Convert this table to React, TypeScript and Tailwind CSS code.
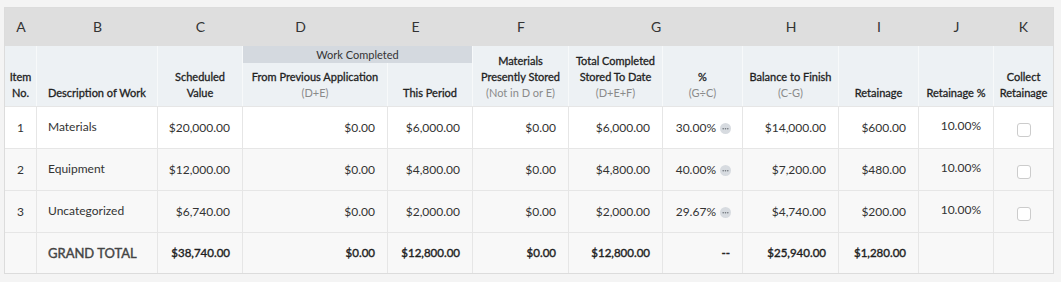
import React from "react";

const COLS =
  "grid grid-cols-[32px_121px_85px_145px_85px_96px_94px_80px_96px_80px_75px_59px]";

function Dots() {
  return (
    <svg width="11" height="11" viewBox="0 0 11 11" className="mt-[2px] shrink-0">
      <circle cx="5.5" cy="5.5" r="5.5" fill="#d7dbe0" />
      <circle cx="3.2" cy="5.7" r="0.8" fill="#6f757c" />
      <circle cx="5.5" cy="5.7" r="0.8" fill="#6f757c" />
      <circle cx="7.8" cy="5.7" r="0.8" fill="#6f757c" />
    </svg>
  );
}

function Checkbox() {
  return (
    <div className="w-[14px] h-[14px] rounded-[3px] border border-[#cccccc] bg-white" />
  );
}

type Row = {
  no: string;
  desc: string;
  c: string;
  d: string;
  e: string;
  f: string;
  g: string;
  pct: string;
  h: string;
  i: string;
  j: string;
};

const rows: Row[] = [
  {
    no: "1",
    desc: "Materials",
    c: "$20,000.00",
    d: "$0.00",
    e: "$6,000.00",
    f: "$0.00",
    g: "$6,000.00",
    pct: "30.00%",
    h: "$14,000.00",
    i: "$600.00",
    j: "10.00%",
  },
  {
    no: "2",
    desc: "Equipment",
    c: "$12,000.00",
    d: "$0.00",
    e: "$4,800.00",
    f: "$0.00",
    g: "$4,800.00",
    pct: "40.00%",
    h: "$7,200.00",
    i: "$480.00",
    j: "10.00%",
  },
  {
    no: "3",
    desc: "Uncategorized",
    c: "$6,740.00",
    d: "$0.00",
    e: "$2,000.00",
    f: "$0.00",
    g: "$2,000.00",
    pct: "29.67%",
    h: "$4,740.00",
    i: "$200.00",
    j: "10.00%",
  },
];

const bodyCell = "border-r border-[#e6e6e6] flex items-center";
const num = "border-r border-[#e6e6e6] flex items-center justify-end pr-[12px]";
const hdr =
  "border-r border-[#f7f9fa] flex flex-col justify-end items-center text-center pb-[5px]";
const sub = "text-[#8a8a8a] [-webkit-text-stroke:0px]";

export default function App() {
  return (
    <div
      className="min-h-screen w-full bg-[#f4f4f4] pt-[7px] pl-[4px]"
      style={{ fontFamily: "Lato, 'Noto Sans', Arial, sans-serif" }}
    >
      <div className="w-[1050px] border border-[#dcdcdc] bg-white text-[12px] leading-[16px] text-[#333333]">
        {/* Letter row */}
        <div className="flex h-[38px] bg-[#dedede] text-[14px] text-[#333333]">
          {[
            ["A", "w-[32px]"],
            ["B", "w-[121px]"],
            ["C", "w-[85px]"],
            ["D", "w-[115px]"],
            ["E", "w-[115px]"],
            ["F", "w-[96px]"],
            ["G", "w-[174px]"],
            ["H", "w-[96px]"],
            ["I", "w-[80px]"],
            ["J", "w-[75px]"],
            ["K", "w-[59px]"],
          ].map(([l, w]) => (
            <div key={l} className={`${w} flex items-center justify-center`}>
              {l}
            </div>
          ))}
        </div>

        {/* Header row */}
        <div
          className={`${COLS} h-[61px] bg-[#edf1f4] border-b border-[#e6e6e6] text-[11px] font-normal text-[#222222] [-webkit-text-stroke:0.3px]`}
        >
          <div className={hdr}>
            <span>Item</span>
            <span>No.</span>
          </div>
          <div className={`${hdr} !items-start pl-[11px]`}>
            <span>Description of Work</span>
          </div>
          <div className={hdr}>
            <span>Scheduled</span>
            <span>Value</span>
          </div>
          <div className="col-span-2 border-r border-[#f7f9fa] flex flex-col">
            <div className="h-[17px] bg-[#d4d9df] flex items-center justify-center text-[#333333] [-webkit-text-stroke:0px]">
              Work Completed
            </div>
            <div className="flex flex-1">
              <div className="w-[145px] border-r border-[#f7f9fa] flex flex-col justify-end items-center text-center pb-[5px]">
                <span>From Previous Application</span>
                <span className={sub}>(D+E)</span>
              </div>
              <div className="flex-1 flex flex-col justify-end items-center text-center pb-[5px]">
                <span>This Period</span>
              </div>
            </div>
          </div>
          <div className={hdr}>
            <span>Materials</span>
            <span>Presently Stored</span>
            <span className={sub}>(Not in D or E)</span>
          </div>
          <div className={hdr}>
            <span>Total Completed</span>
            <span>Stored To Date</span>
            <span className={sub}>(D+E+F)</span>
          </div>
          <div className={hdr}>
            <span>%</span>
            <span className={sub}>(G÷C)</span>
          </div>
          <div className={hdr}>
            <span>Balance to Finish</span>
            <span className={sub}>(C-G)</span>
          </div>
          <div className={hdr}>
            <span>Retainage</span>
          </div>
          <div className={hdr}>
            <span>Retainage %</span>
          </div>
          <div className="flex flex-col justify-end items-center text-center pb-[5px]">
            <span>Collect</span>
            <span>Retainage</span>
          </div>
        </div>

        {/* Body rows */}
        {rows.map((r, idx) => (
          <div
            key={r.no}
            className={`${COLS} h-[42px] border-b border-[#e6e6e6] ${idx === 0 ? "bg-white" : "bg-[#f8f8f8]"}`}
          >
            <div className={`${bodyCell} justify-center`}>{r.no}</div>
            <div className={`${bodyCell} pl-[11px] pb-[2px]`}>{r.desc}</div>
            <div className={num}>{r.c}</div>
            <div className={num}>{r.d}</div>
            <div className={num}>{r.e}</div>
            <div className={num}>{r.f}</div>
            <div className={num}>{r.g}</div>
            <div className={`${bodyCell} justify-end pr-[11px] gap-[4px]`}>
              <span>{r.pct}</span>
              <Dots />
            </div>
            <div className={num}>{r.h}</div>
            <div className={num}>{r.i}</div>
            <div className={`${num} pb-[4px]`}>{r.j}</div>
            <div className="flex items-center justify-center pt-[4px]">
              <Checkbox />
            </div>
          </div>
        ))}

        {/* Grand total */}
        <div
          className={`${COLS} h-[40px] bg-[#f8f8f8] text-[11.5px] font-normal text-[#1f1f1f] [-webkit-text-stroke:0.4px]`}
        >
          <div className={bodyCell}></div>
          <div className={`${bodyCell} pl-[11px] text-[13px] text-[#444444]`}>GRAND TOTAL</div>
          <div className={num}>$38,740.00</div>
          <div className={num}>$0.00</div>
          <div className={num}>$12,800.00</div>
          <div className={num}>$0.00</div>
          <div className={num}>$12,800.00</div>
          <div className={num}>--</div>
          <div className={num}>$25,940.00</div>
          <div className={num}>$1,280.00</div>
          <div className={bodyCell}></div>
          <div></div>
        </div>
      </div>
    </div>
  );
}
